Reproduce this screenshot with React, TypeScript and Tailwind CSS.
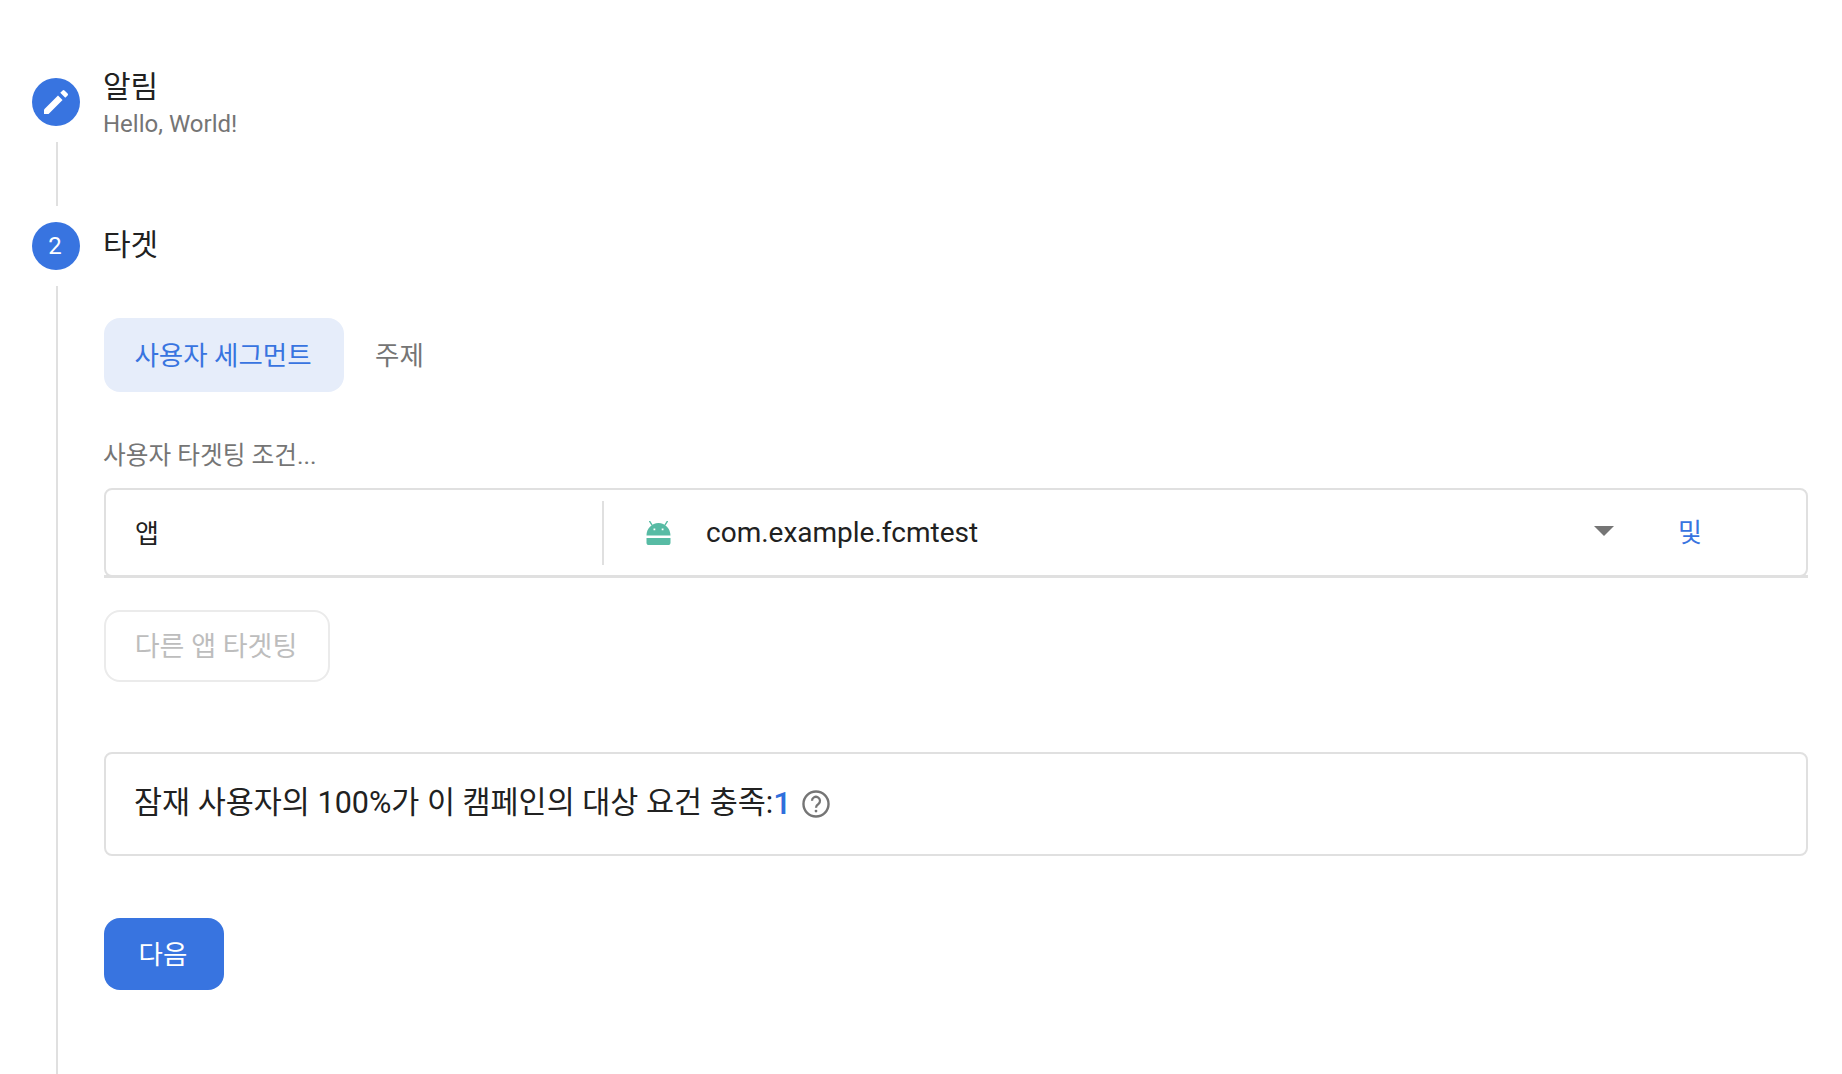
const FONT = "font-['Roboto','Noto_Sans_CJK_KR',sans-serif]";

function EditIcon() {
  return (
    <svg width="32" height="32" viewBox="0 0 24 24" fill="white">
      <path d="M3 17.6V21h3.4L16.9 10.5l-3.4-3.4L3 17.6z" />
      <path d="M20.7 7.04a1 1 0 0 0 0-1.41l-2.34-2.34a1 1 0 0 0-1.41 0L15.2 5l3.75 3.75 1.75-1.71z" />
    </svg>
  );
}

function AndroidIcon() {
  return (
    <svg width="25" height="24" viewBox="0 0 24 24" fill="#57bba4">
      <path d="M3.2 0.4 5.4 3.8M20.8 0.4 18.6 3.8" stroke="#57bba4" strokeWidth="1.4" strokeLinecap="round" />
      <path fillRule="evenodd" d="M0 14.4C0 7.6 5.4 2 12 2s12 5.6 12 12.4H0zM7 7.4h1.8v1.8H7zM15.2 7.4H17v1.8h-1.8z" />
      <path d="M0 17h24v4.4a2.6 2.6 0 0 1-2.6 2.6H2.6A2.6 2.6 0 0 1 0 21.4z" />
    </svg>
  );
}

function HelpIcon() {
  return (
    <svg width="32" height="32" viewBox="0 0 24 24" fill="none" stroke="#757575" strokeWidth="1.8">
      <circle cx="12" cy="12" r="9.4" />
      <path d="M9 9.6a3 3 0 1 1 4.8 2.4c-1.2.8-1.8 1.4-1.8 2.8" strokeWidth="1.7" />
      <circle cx="12" cy="17.3" r="1.05" fill="#757575" stroke="none" />
    </svg>
  );
}

export default function App() {
  return (
    <div className={`${FONT} h-screen overflow-hidden bg-white pl-8 pr-[34px] pt-[78px] flex flex-col`}>
      {/* step 1 */}
      <div className="flex gap-6">
        <div className="flex w-12 flex-col">
          <div className="flex h-12 w-12 items-center justify-center rounded-full bg-[#3874e0]">
            <EditIcon />
          </div>
          <div className="ml-6 mt-4 h-16 w-0.5 bg-[#e0e0e0]" />
        </div>
        <div className="-ml-px -mt-[13px]">
          <div className="text-[30px] leading-[44px] text-[#212121]">알림</div>
          <div className="pt-px text-[24px] leading-[28px] text-[#757575]">Hello, World!</div>
        </div>
      </div>

      {/* step 2 */}
      <div className="mt-4 flex flex-1 gap-6">
        <div className="flex w-12 flex-col">
          <div className="flex h-12 w-12 items-center justify-center rounded-full bg-[#3874e0] pr-0.5 text-[24px] text-white">2</div>
          <div className="ml-6 mt-4 w-0.5 flex-1 bg-[#e0e0e0]" />
        </div>
        <div className="min-w-0 flex-1">
          <div className="-ml-px h-[44px] pt-px text-[30px] leading-[44px] text-[#212121]">타겟</div>

          <div className="mt-[52px] flex items-center">
            <div className="flex h-[74px] w-[240px] items-center justify-center rounded-2xl bg-[#e6edfa] pr-0.5 pt-0.5 text-[26.5px] text-[#3874e0]">사용자 세그먼트</div>
            <div className="ml-[31px] pt-0.5 text-[26.5px] text-[#757575]">주제</div>
          </div>

          <div className="-ml-px mt-[44px] pt-[3px] text-[24.7px] leading-[34px] text-[#757575]">사용자 타겟팅 조건...</div>

          <div className="-mt-px pt-4">
            <div className="flex h-[89px] items-center rounded-lg border-2 border-[#e0e0e0]">
              <div className="w-[496px] pl-[29px] pt-[3px] text-[26px] text-[#212121]">앱</div>
              <div className="h-16 w-0.5 bg-[#e0e0e0]" />
              <div className="ml-[42px]"><AndroidIcon /></div>
              <div className="ml-[35px] flex-1 text-[28px] text-[#212121]">com.example.fcmtest</div>
              <div className="mb-1 h-0 w-0 border-x-[10px] border-t-[10px] border-x-transparent border-t-[#757575]" />
              <div className="ml-[64px] mr-[104px] pt-px text-[26px] text-[#3874e0]">및</div>
            </div>
            <div className="-mt-0.5 h-[3px] bg-[#e0e0e0]" />
          </div>

          <div className="mt-[32px] flex h-[72px] w-[226px] items-center justify-center rounded-2xl border-2 border-[#ebebeb] pr-0.5 pt-0.5 text-[27px] text-[#bdbdbd]">다른 앱 타겟팅</div>

          <div className="mt-[70px] flex h-[104px] items-center rounded-lg border-2 border-[#e0e0e0] pl-[28px]">
            <span className="-mt-0.5 text-[30.5px] text-[#212121]">잠재 사용자의 100%가 이 캠페인의 대상 요건 충족:</span>
            <span className="-mt-0.5 text-[32px] font-medium text-[#2f6fdc]">1</span>
            <span className="ml-[9px]"><HelpIcon /></span>
          </div>

          <div className="mt-[62px] flex h-[72px] w-[120px] items-center justify-center rounded-2xl bg-[#3874e0] pr-0.5 pt-0.5 text-[26.5px] text-white">다음</div>
        </div>
      </div>
    </div>
  );
}
